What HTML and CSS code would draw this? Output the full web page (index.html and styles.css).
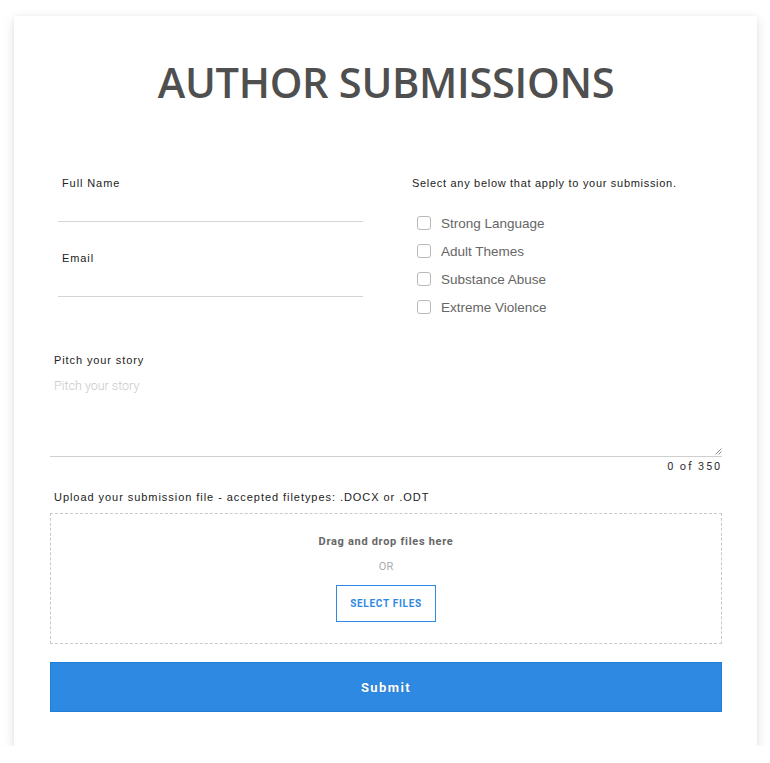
FILE: index.html
```html
<!DOCTYPE html>
<html lang="en">
<head>
<meta charset="utf-8">
<title>Author Submissions</title>
<link rel="stylesheet" href="styles.css">
</head>
<body>
<main class="card">
  <h1 class="title">AUTHOR SUBMISSIONS</h1>
  <form class="form">
    <div class="top-grid">
      <div class="left-col">
        <div class="field">
          <label class="label">Full Name</label>
          <input class="line-input" type="text">
        </div>
        <div class="field">
          <label class="label">Email</label>
          <input class="line-input" type="email">
        </div>
      </div>
      <div class="right-col">
        <p class="label check-intro">Select any below that apply to your submission.</p>
        <ul class="checks">
          <li class="check"><span class="box"></span>Strong Language</li>
          <li class="check"><span class="box"></span>Adult Themes</li>
          <li class="check"><span class="box"></span>Substance Abuse</li>
          <li class="check"><span class="box"></span>Extreme Violence</li>
        </ul>
      </div>
    </div>

    <div class="pitch">
      <label class="label pitch-label">Pitch your story</label>
      <div class="textarea">
        <span class="placeholder">Pitch your story</span>
        <svg class="grip" width="7" height="7" viewBox="0 0 7 7"><path d="M6.5 0.5 L0.5 6.5 M6.5 3.5 L3.5 6.5" stroke="#8a8a8a" stroke-width="1"/></svg>
      </div>
      <div class="counter">0 of 350</div>
    </div>

    <div class="upload">
      <p class="label upload-label">Upload your submission file - accepted filetypes: .DOCX or .ODT</p>
      <div class="dropzone">
        <div class="drop-text">Drag and drop files here</div>
        <div class="or">OR</div>
        <div class="select-btn">SELECT FILES</div>
      </div>
    </div>

    <div class="submit">Submit</div>
  </form>
</main>
</body>
</html>
```

FILE: styles.css
```css
html, body {
  margin: 0;
  padding: 0;
  background: #ffffff;
}

body {
  padding: 16px 13px 0 14px;
  font-family: "Liberation Sans", Arial, sans-serif;
}

.card {
  background: #fff;
  box-shadow: 0 4px 12px rgba(0, 0, 0, 0.12), 0 0 4px rgba(0, 0, 0, 0.04);
  padding: 36px 35px 34px 36px;
  height: 730px;
  box-sizing: border-box;
}

.title {
  margin: 0;
  text-align: center;
  font-family: "Open Sans", sans-serif;
  font-weight: 600;
  font-size: 42px;
  line-height: 60px;
  letter-spacing: -0.3px;
  color: #4f4f4f;
  transform: scaleX(0.99);
}

.form {
  margin-top: 64px;
}

.top-grid {
  display: grid;
  grid-template-columns: 1fr 1fr;
}

.left-col {
  padding: 0 23px 0 8px;
}

.field {
  display: flex;
  flex-direction: column;
  height: 75px;
}

.label {
  margin: 0;
  font-family: "Liberation Sans", Arial, sans-serif;
  font-size: 11px;
  letter-spacing: 0.9px;
  color: #222;
  line-height: 14px;
}

.field .label {
  padding-left: 4px;
}

.line-input {
  border: none;
  border-bottom: 1px solid #d5d5d5;
  height: 24px;
  margin-top: 7px;
  padding: 0;
  outline: none;
  background: transparent;
}

.right-col {
  padding-left: 26px;
}

.check-intro {
  letter-spacing: 0.7px;
}

.checks {
  list-style: none;
  margin: 19px 0 0 0;
  padding: 0 0 0 5px;
}

.check {
  display: flex;
  align-items: center;
  height: 28px;
  font-family: "Liberation Sans", Arial, sans-serif;
  font-size: 13.5px;
  color: #666;
}

.box {
  width: 12px;
  height: 12px;
  border: 1.5px solid #b9b9b9;
  border-radius: 3px;
  margin-right: 10px;
  flex: none;
}

.pitch {
  margin-top: 24px;
}

.pitch-label {
  padding-left: 4px;
}

.textarea {
  position: relative;
  height: 89px;
  border-bottom: 1px solid #cfcfcf;
  padding: 8px 4px 0;
  box-sizing: border-box;
}

.placeholder {
  font-family: Roboto, sans-serif;
  font-weight: 300;
  font-size: 12.5px;
  color: #c8c8c8;
}

.grip {
  position: absolute;
  right: 0;
  bottom: 1px;
}

.counter {
  text-align: right;
  font-family: Roboto, sans-serif;
  font-size: 11px;
  letter-spacing: 1.8px;
  color: #333;
  line-height: 14px;
  margin-top: 3px;
}

.upload {
  margin-top: 16px;
}

.upload-label {
  padding-left: 4px;
  letter-spacing: 0.95px;
}

.dropzone {
  margin-top: 9px;
  border: 1px dashed #c9c9c9;
  height: 131px;
  box-sizing: border-box;
  display: flex;
  flex-direction: column;
  align-items: center;
  padding-top: 20px;
}

.drop-text {
  font-family: Roboto, sans-serif;
  font-weight: 700;
  font-size: 11px;
  letter-spacing: 0.7px;
  color: #666;
  line-height: 16px;
}

.or {
  font-family: Roboto, sans-serif;
  font-size: 11px;
  color: #aaa;
  line-height: 16px;
  margin-top: 9px;
}

.select-btn {
  margin-top: 10px;
  width: 100px;
  height: 37px;
  box-sizing: border-box;
  border: 1px solid #2e89e2;
  display: flex;
  align-items: center;
  justify-content: center;
  font-family: Roboto, sans-serif;
  font-weight: 700;
  font-size: 10px;
  letter-spacing: 0.7px;
  color: #2e89e2;
}

.submit {
  margin-top: 18px;
  height: 50px;
  box-sizing: border-box;
  background: #2e89e2;
  border: 1px solid #1f7ddb;
  display: flex;
  align-items: center;
  justify-content: center;
  font-family: Roboto, sans-serif;
  font-weight: 700;
  font-size: 13px;
  letter-spacing: 1.4px;
  color: #fff;
  text-shadow: 0 0 1px rgba(0, 0, 0, 0.25);
}
```
